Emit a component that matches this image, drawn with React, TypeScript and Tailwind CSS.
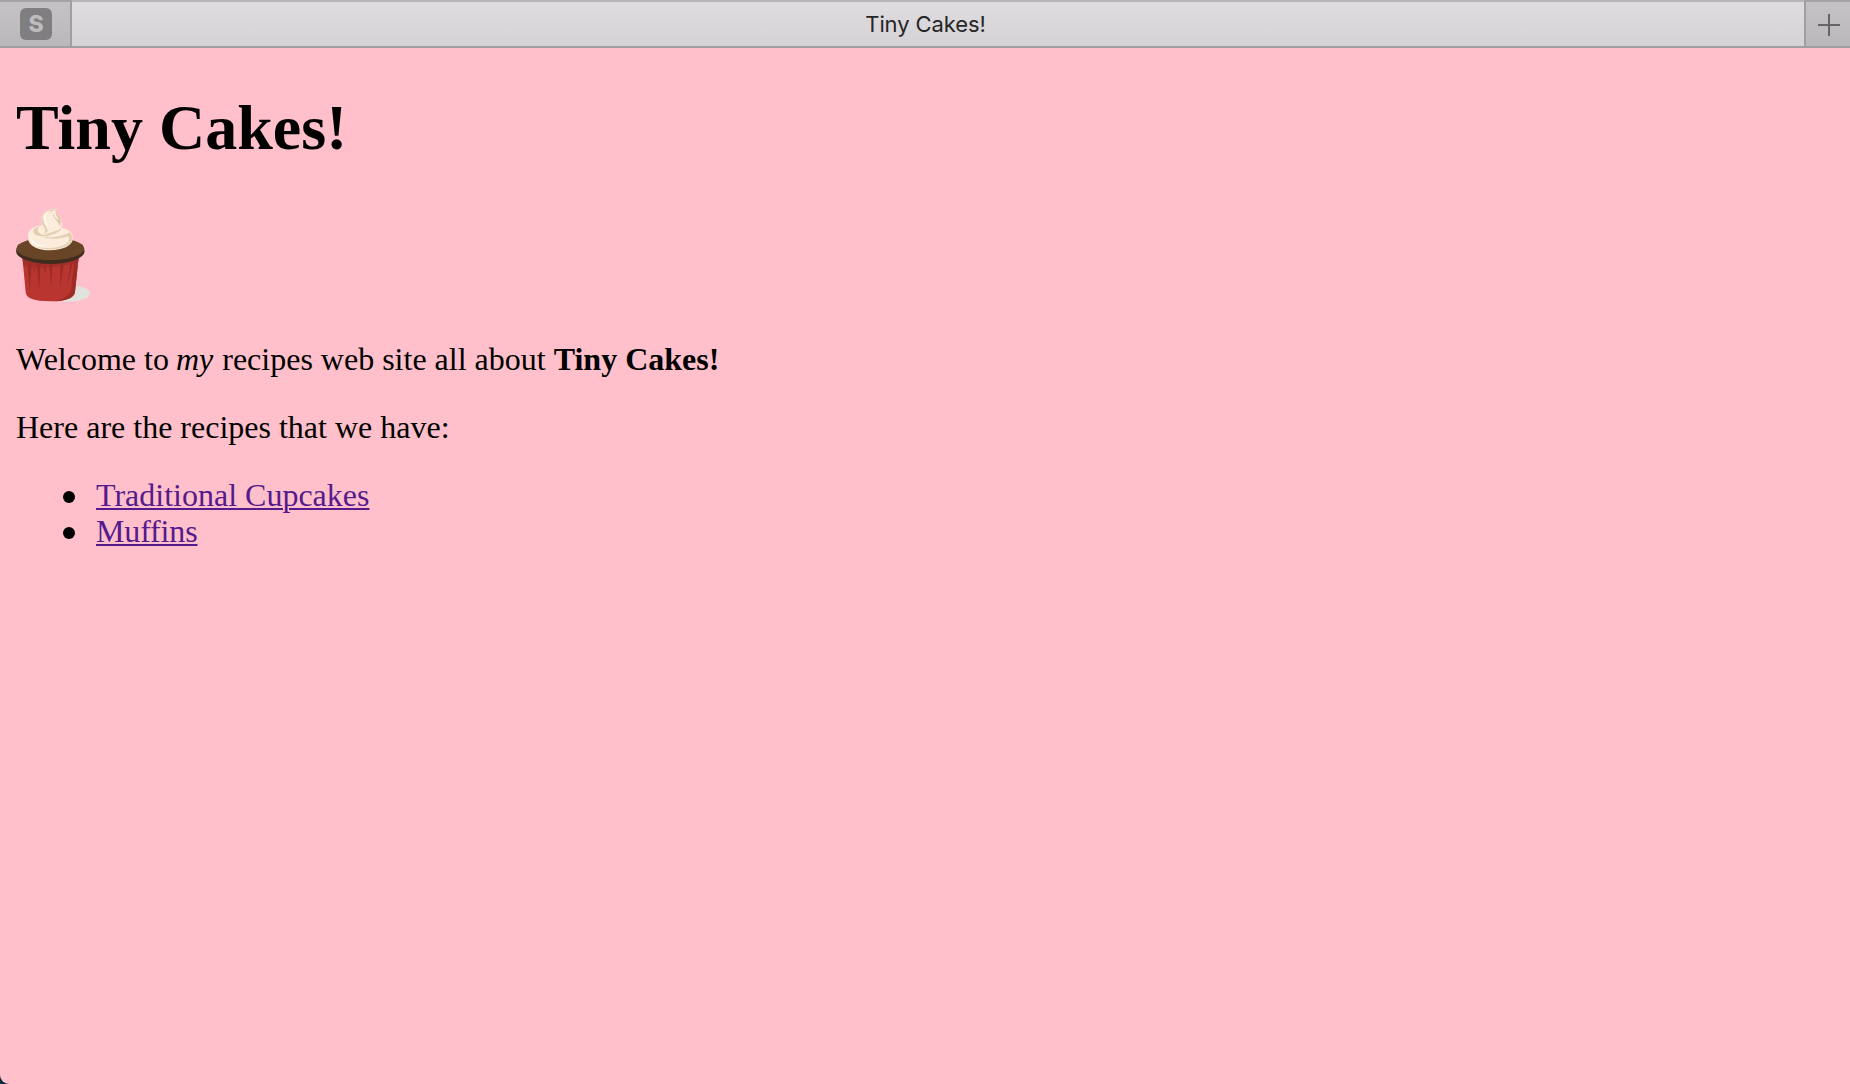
import React from "react";

function Cupcake() {
  return (
    <svg className="mt-[41px] block h-[100px] w-[76px]" viewBox="48 30 228 300" role="img" aria-label="Cupcake">
      <ellipse cx="204" cy="295" rx="66" ry="25" fill="#e2e2dc" />
      <path d="M67 186 L77 292 Q78 319 151 319 Q222 319 225 290 L236 186 Z" fill="#b93630" />
      <path d="M67 186 L70 213 Q151 226 234 202 L236 186 Z" fill="#a42e29" />
      <path d="M236 186 L225 290 Q223 314 165 319 Q206 309 213 286 L223 195 Z" fill="#9f2b27" />
      <path d="M82 204 L89 285 L95 206 Z M110 206 L118 284 L121 208 Z M149 208 L152 279 L158 208 Z M182 207 L180 280 L192 205 Z M211 204 L201 276 L219 202 Z" fill="#9c2a26" />
      <path d="M98 208 L104 240 L107 208 Z M128 209 L136 240 L140 209 Z" fill="#a52e29" />
      <ellipse cx="151" cy="168" rx="103" ry="39" fill="#3e2c1e" />
      <ellipse cx="151" cy="161" rx="102" ry="34" fill="#684526" />
      <path d="M84 128 C82 108 94 100 109 94 C117 91 123 92 127 91 C121 77 121 58 137 48 C148 41 162 45 173 39 C167 45 164 49 167 53 C181 61 190 80 184 98 C205 102 219 112 219 130 C219 151 189 166 151 166 C112 166 84 151 84 128 Z" fill="#fbecdc" />
      <path d="M173 39 C167 49 152 48 143 57 C133 68 137 82 146 95 C148 103 141 112 133 120 C137 105 134 99 128 91 C121 76 123 59 137 49 C149 41 164 46 173 39 Z" fill="#e6d2b5" />
      <path d="M130 64 C132 51 145 49 153 47 C140 56 135 66 139 78 C142 92 150 95 145 106 C140 96 128 81 130 64 Z" fill="#fff6e9" />
      <path d="M160 53 C155 70 177 77 179 94 C188 76 179 61 167 53 C168 64 177 70 176 77 C169 70 161 65 160 53 Z" fill="#dfc8a7" />
      <path d="M184 98 C174 108 151 111 132 121 C119 117 105 108 119 94 C100 98 93 111 106 119 C112 124 128 124 140 124 C161 116 184 112 184 98 Z" fill="#e4cfb0" />
      <path d="M120 123 C157 132 193 122 209 112 C218 121 220 134 212 143 C190 165 141 169 109 155 C143 163 181 158 198 147 C210 139 209 129 203 124 C183 132 147 135 120 123 Z" fill="#e5d0b4" />
      <path d="M90 121 C93 141 112 149 140 153 C112 157 88 144 90 121 Z" fill="#fffaf2" />
    </svg>
  );
}

function RecipeLink({ children }: { children: React.ReactNode }) {
  return (
    <li className="flex items-center">
      <span className="mt-[3px] mr-[21px] ml-[47px] size-3 shrink-0 rounded-full bg-black" />
      <a href="#" className="text-[#551a8b] underline decoration-2 underline-offset-2">{children}</a>
    </li>
  );
}

export default function App() {
  return (
    <div className="flex h-[1084px] w-[1850px] flex-col overflow-hidden bg-[#0d2a40]">
      <div className="flex min-h-0 flex-1 flex-col overflow-hidden rounded-bl-[9px] bg-[#ffc0cb]">
        <header className="flex h-12 shrink-0 border-t-2 border-b-2 border-t-[#b7b5b8] border-b-[#a09ea1] font-['Inter',sans-serif]">
          <div className="-mt-0.5 flex w-[72px] items-center justify-center border-t-2 border-r-2 border-t-[#a5a3a6] border-r-[#a09ea1] bg-linear-to-b from-[#c4c2c5] to-[#bab8bb]">
            <span className="ml-0.5 flex size-8 items-center justify-center rounded-[6px] bg-[#807e80] text-[23px] leading-none font-extrabold text-[#bebcbf]">S</span>
          </div>
          <div className="flex flex-1 items-center justify-center bg-linear-to-b from-[#dedcdf] to-[#d5d3d6] pr-[25px] text-[22px] leading-none tracking-[-0.1px] text-[#252526]">
            <span>Tiny Cakes!</span>
          </div>
          <div className="-mt-0.5 flex w-[46px] items-center justify-center border-t-2 border-l-2 border-t-[#a5a3a6] border-l-[#a09ea1] bg-linear-to-b from-[#c4c2c5] to-[#bab8bb]">
            <svg className="mt-0.5 ml-0.5 size-[22px]" viewBox="0 0 22 22" stroke="#656565" strokeWidth="2">
              <path d="M11 0V22M0 11H22" />
            </svg>
          </div>
        </header>
        <main className="px-4 pt-11 font-['Liberation_Serif',serif] text-[32px] leading-9 text-black">
          <h1 className="text-[64px] leading-[72px] font-bold">Tiny Cakes!</h1>
          <Cupcake />
          <p className="mt-9">
            Welcome to <em className="-ml-px mr-px">my</em> recipes web site all about <strong>Tiny Cakes!</strong>
          </p>
          <p className="mt-8">Here are the recipes that we have:</p>
          <ul className="mt-8">
            <RecipeLink>Traditional Cupcakes</RecipeLink>
            <RecipeLink><span className="tracking-[-0.15px] [font-variant-ligatures:common-ligatures]">Muffins</span></RecipeLink>
          </ul>
        </main>
      </div>
    </div>
  );
}
